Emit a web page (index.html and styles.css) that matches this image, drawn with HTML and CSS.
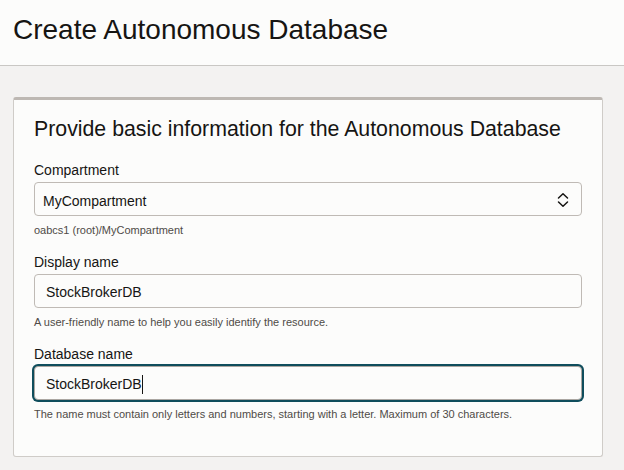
FILE: index.html
```html
<!DOCTYPE html>
<html lang="en">
<head>
<meta charset="utf-8">
<title>Create Autonomous Database</title>
<link rel="stylesheet" href="styles.css">
</head>
<body>
<header class="page-header">
  <h1 class="page-title">Create Autonomous Database</h1>
</header>
<main class="page-body">
  <section class="card">
    <h2 class="card-title">Provide basic information for the Autonomous Database</h2>

    <div class="field">
      <div class="label">Compartment</div>
      <div class="control select">
        <span class="value sel-value">MyCompartment</span>
        <svg class="chevrons" width="12" height="16" viewBox="0 0 12 16" aria-hidden="true">
          <path d="M1.5 6 L6 1.8 L10.5 6" fill="none" stroke="#161513" stroke-width="1.5" stroke-linecap="round" stroke-linejoin="round"/>
          <path d="M1.5 10 L6 14.2 L10.5 10" fill="none" stroke="#161513" stroke-width="1.5" stroke-linecap="round" stroke-linejoin="round"/>
        </svg>
      </div>
      <div class="help">oabcs1 (root)/MyCompartment</div>
    </div>

    <div class="field">
      <div class="label">Display name</div>
      <div class="control text">
        <span class="value">StockBrokerDB</span>
      </div>
      <div class="help">A user-friendly name to help you easily identify the resource.</div>
    </div>

    <div class="field">
      <div class="label">Database name</div>
      <div class="control text focused">
        <span class="value">StockBrokerDB</span><span class="caret"></span>
      </div>
      <div class="help">The name must contain only letters and numbers, starting with a letter. Maximum of 30 characters.</div>
    </div>
  </section>
</main>
</body>
</html>
```
FILE: styles.css
```css
html, body {
  margin: 0;
  padding: 0;
}
body {
  background: #f3f2f1;
  font-family: "Liberation Sans", Arial, sans-serif;
  color: #161513;
  width: 624px;
  height: 470px;
  overflow: hidden;
}
.page-header {
  background: #fcfcfb;
  height: 65px;
  border-bottom: 1px solid #c9c7c4;
  display: flex;
  align-items: flex-start;
  box-sizing: content-box;
}
.page-title {
  margin: 0;
  padding: 12px 0 0 13px;
  font-size: 28px;
  font-weight: normal;
  line-height: 36px;
  color: #161513;
}
.page-body {
  padding: 31px 21px 0 13px;
}
.card {
  background: #fcfcfb;
  border: 1px solid #cfccc8;
  border-top: 3px solid #bdb8b3;
  border-radius: 3px;
  padding: 16px 20px 34px 20px;
}
.card-title {
  margin: 0 0 18px 0;
  font-size: 21.3px;
  font-weight: normal;
  line-height: 26px;
  color: #161513;
}
.field + .field {
  margin-top: 14px;
}
.label {
  font-size: 14px;
  line-height: 20px;
  margin-bottom: 2px;
  color: #161513;
}
.control {
  height: 34px;
  box-sizing: border-box;
  border: 1px solid #bfbab5;
  border-radius: 4px;
  background: #fcfcfb;
  display: flex;
  align-items: center;
  font-size: 14px;
  color: #161513;
}
.select {
  padding: 0 12px 0 8px;
  justify-content: space-between;
}
.sel-value {
  padding-top: 4px;
}
.text {
  padding: 0 11px;
}
.text .value {
  padding-top: 2px;
}
.focused {
  box-shadow: 0 0 0 2px #0f4d5c;
  border-color: #aaa6a1;
}
.caret {
  display: inline-block;
  width: 1px;
  height: 19px;
  background: #161513;
  margin-top: 2px;
}
.chevrons {
  display: block;
  margin-top: 1px;
}
.help {
  margin-top: 6px;
  font-size: 11px;
  line-height: 16px;
  color: #4f4b47;
}
```
